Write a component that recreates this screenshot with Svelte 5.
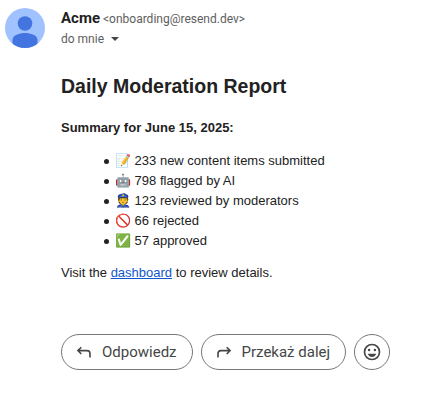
<script>
  const items = [
    ['📝', '233 new content items submitted'],
    ['🤖', '798 flagged by AI'],
    ['👮', '123 reviewed by moderators'],
    ['🚫', '66 rejected'],
    ['✅', '57 approved']
  ];
</script>

<main class="mail">
  <svg class="avatar" viewBox="0 0 40 40" aria-hidden="true">
    <defs><clipPath id="disc"><circle cx="20" cy="20" r="20" /></clipPath></defs>
    <g clip-path="url(#disc)">
      <rect width="40" height="40" fill="#a0c3ff" />
      <circle cx="20" cy="15.5" r="7.3" fill="#4374e0" />
      <path d="M7.500 40v-8c0-5 7-7 12.500-7s12.500 2 12.500 7v8z" fill="#4374e0" />
    </g>
  </svg>
  <div class="content">
    <header>
      <div class="from"><strong>Acme</strong> <span>&lt;onboarding@resend.dev&gt;</span></div>
      <button class="to" type="button">do mnie <i class="caret"></i></button>
    </header>
    <article>
      <h2>Daily Moderation Report</h2>
      <p><strong>Summary for June 15, 2025:</strong></p>
      <ul>
        {#each items as [icon, text]}
          <li>{icon} {text}</li>
        {/each}
      </ul>
      <p>Visit the <a href="#dashboard">dashboard</a> to review details.</p>
    </article>
    <footer>
      <button class="pill" type="button">
        <svg class="arrow" viewBox="0 0 20 20" aria-hidden="true"><path d="M7.300 5.200 3.900 8.600l3.400 3.400M4 8.600h9a3 3 0 0 1 3 3v3.900" /></svg>
        Odpowiedz
      </button>
      <button class="pill" type="button">
        <svg class="arrow" viewBox="0 0 20 20" aria-hidden="true"><path d="m12.700 5.200 3.400 3.400-3.400 3.400M16 8.600H7a3 3 0 0 0-3 3v3.900" /></svg>
        Przekaż dalej
      </button>
      <button class="pill round" type="button" aria-label="Dodaj reakcję">
        <svg class="smile" viewBox="0 0 24 24" aria-hidden="true"><path d="M15.500 11a1.500 1.500 0 1 0 0-3 1.500 1.500 0 0 0 0 3zM8.500 11a1.500 1.500 0 1 0 0-3 1.500 1.500 0 0 0 0 3zM12 18c2.330 0 4.310-1.660 5.110-4H6.890c.8 2.340 2.780 4 5.110 4zM12 2a10 10 0 1 0 0 20 10 10 0 0 0 0-20zm0 18a8 8 0 1 1 0-16 8 8 0 0 1 0 16z" /></svg>
      </button>
    </footer>
  </div>
</main>

<style>
  :global(body) {
    background: #fff;
  }
  .mail {
    display: flex;
    gap: 16px;
    padding: 8px 5px;
    color: #222;
    font-family: "Liberation Sans", Arial, sans-serif;
    font-size: 13px;
    line-height: 20px;
  }
  .avatar {
    flex: none;
    width: 40px;
    height: 40px;
  }
  .content {
    flex: 1;
    min-width: 0;
  }
  header {
    color: #5e5e5e;
    font-family: Roboto, sans-serif;
    font-size: 12px;
  }
  .from strong {
    color: #1f1f1f;
    font-size: 15px;
  }
  .to {
    display: flex;
    align-items: center;
    gap: 7px;
    padding: 0;
    border: 0;
    background: none;
    color: inherit;
    font: inherit;
    line-height: 20px;
  }
  .caret {
    border: 4px solid transparent;
    border-top-color: #444;
    border-bottom: 0;
  }
  h2 {
    margin: 27px 0 22px;
    line-height: 20px;
  }
  p {
    margin: 12px 0;
  }
  ul {
    margin: 13px 0 12px;
    padding: 0 0 0 43px;
    list-style: none;
  }
  li {
    display: flex;
    align-items: center;
    gap: 6px;
  }
  li::before {
    width: 5px;
    height: 5px;
    border-radius: 50%;
    background: #222;
    content: "";
  }
  a {
    color: #15c;
  }
  footer {
    display: flex;
    gap: 8px;
    margin-top: 51px;
  }
  .pill {
    display: flex;
    flex: none;
    align-items: center;
    gap: 8px;
    height: 36px;
    padding: 0 15px 0 12px;
    border: 1px solid #747775;
    border-radius: 18px;
    background: #fff;
    color: #444746;
    font: 15px/20px Roboto, sans-serif;
  }
  .round {
    justify-content: center;
    width: 36px;
    padding: 0;
  }
  .arrow {
    width: 20px;
    height: 20px;
    fill: none;
    stroke: #444746;
    stroke-width: 1.6;
  }
  .smile {
    flex: none;
    width: 20px;
    height: 20px;
    fill: #444746;
  }
</style>
